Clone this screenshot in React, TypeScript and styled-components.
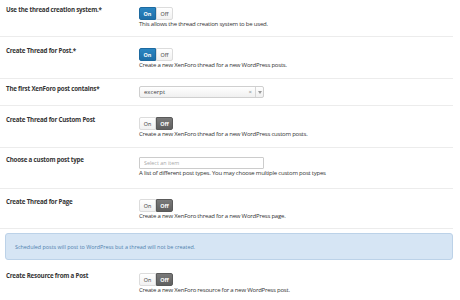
import { createGlobalStyle, styled } from "styled-components";

const GlobalStyle = createGlobalStyle`
  html, body {
    margin: 0;
    padding: 0;
    background: #ffffff;
  }
  body {
    font-family: "Open Sans", "Liberation Sans", sans-serif;
    color: #333;
  }
`;

type ToggleRow = {
  kind: "toggle";
  label: string;
  on: boolean;
  desc: string;
};

type SelectRow = {
  kind: "select";
  label: string;
  value?: string;
  placeholder?: string;
  desc?: string;
};

type NoticeRow = {
  kind: "notice";
  text: string;
};

type Item = ToggleRow | SelectRow | NoticeRow;

const items: Item[] = [
  {
    kind: "toggle",
    label: "Use the thread creation system.*",
    on: true,
    desc: "This allows the thread creation system to be used.",
  },
  {
    kind: "toggle",
    label: "Create Thread for Post.*",
    on: true,
    desc: "Create a new XenForo thread for a new WordPress posts.",
  },
  {
    kind: "select",
    label: "The first XenForo post contains*",
    value: "excerpt",
  },
  {
    kind: "toggle",
    label: "Create Thread for Custom Post",
    on: false,
    desc: "Create a new XenForo thread for a new WordPress custom posts.",
  },
  {
    kind: "select",
    label: "Choose a custom post type",
    placeholder: "Select an item",
    desc: "A list of different post types. You may choose multiple custom post types",
  },
  {
    kind: "toggle",
    label: "Create Thread for Page",
    on: false,
    desc: "Create a new XenForo thread for a new WordPress page.",
  },
  {
    kind: "notice",
    text: "Scheduled posts will post to WordPress but a thread will not be created.",
  },
  {
    kind: "toggle",
    label: "Create Resource from a Post",
    on: false,
    desc: "Create a new XenForo resource for a new WordPress post.",
  },
];

// padding (top / bottom) per row, read off the screenshot
const rowPad = ["7px 0 8px", "11px 0 9px", "7px 0 7px", "11px 0 9px", "9px 0 11px", "10px 0 8px", "", "13px 0 8px"];

function App() {
  return (
    <>
      <GlobalStyle />
      <Page>
        {items.map((item, i) => {
          if (item.kind === "notice") {
            return (
              <Notice key={i}>
                <span>{item.text}</span>
              </Notice>
            );
          }
          const last = i === items.length - 1;
          return (
            <Row key={i} $pad={rowPad[i]} $noBorder={last}>
              <Label>{item.label}</Label>
              <Field>
                {item.kind === "toggle" ? (
                  <Toggle>
                    <ToggleBtn $active={item.on} $side="on">
                      On
                    </ToggleBtn>
                    <ToggleBtn $active={!item.on} $side="off">
                      Off
                    </ToggleBtn>
                  </Toggle>
                ) : item.value ? (
                  <Select>
                    <SelectValue>{item.value}</SelectValue>
                    <Clear>×</Clear>
                    <Arrow>
                      <svg width="4" height="3" viewBox="0 0 4 3">
                        <path d="M0 0 L4 0 L2 3 Z" fill="#999" />
                      </svg>
                    </Arrow>
                  </Select>
                ) : (
                  <Input placeholder={item.placeholder} readOnly />
                )}
                {item.desc && <Desc>{item.desc}</Desc>}
              </Field>
            </Row>
          );
        })}
      </Page>
    </>
  );
}

export default App;

const Page = styled.div`
  width: 460px;
  height: 300px;
  overflow: hidden;
  display: flex;
  flex-direction: column;
`;

const Row = styled.div<{ $pad: string; $noBorder?: boolean }>`
  display: grid;
  grid-template-columns: 139px 1fr;
  margin-right: 7px;
  padding: ${(p) => p.$pad};
  border-bottom: ${(p) => (p.$noBorder ? "none" : "1px solid #ececec")};
  flex-shrink: 0;
`;

const Label = styled.div`
  padding-left: 6px;
  font-size: 6.2px;
  letter-spacing: -0.2px;
  font-weight: 700;
  color: #333;
  line-height: 8px;
  margin-top: -1px;
`;

const Field = styled.div`
  display: flex;
  flex-direction: column;
  align-items: flex-start;
`;

const Toggle = styled.div`
  display: flex;
  height: 13px;
`;

const ToggleBtn = styled.div<{ $active: boolean; $side: "on" | "off" }>`
  width: 17px;
  height: 13px;
  box-sizing: border-box;
  display: flex;
  align-items: center;
  justify-content: center;
  font-size: 5.4px;
  font-weight: ${(p) => (p.$active ? 700 : 400)};
  color: ${(p) => (p.$active ? "#ffffff" : "#333")};
  background: ${(p) =>
    p.$active
      ? p.$side === "on"
        ? "linear-gradient(#2b86c2, #1f6fa8)"
        : "linear-gradient(#7a7a7a, #5f5f5f)"
      : "linear-gradient(#ffffff, #f1f1f1)"};
  border: 1px solid
    ${(p) => (p.$active ? (p.$side === "on" ? "#1d6aa0" : "#5a5a5a") : "#dcdcdc")};
  border-radius: ${(p) => (p.$side === "on" ? "2px 0 0 2px" : "0 2px 2px 0")};
`;

const Desc = styled.div`
  margin-top: 1px;
  font-size: 6px;
  letter-spacing: -0.22px;
  line-height: 7px;
  color: #333;
  white-space: nowrap;
`;

const Select = styled.div`
  width: 125px;
  height: 12px;
  box-sizing: border-box;
  border: 1px solid #cfcfcf;
  border-radius: 2px;
  background: linear-gradient(#ffffff, #f0f0f0);
  display: flex;
  align-items: center;
`;

const SelectValue = styled.span`
  flex: 1;
  padding-left: 4px;
  font-size: 6px;
  color: #444;
`;

const Clear = styled.span`
  font-size: 6px;
  color: #888;
  margin-right: 3px;
`;

const Arrow = styled.span`
  width: 7px;
  height: 100%;
  border-left: 1px solid #d6d6d6;
  display: flex;
  align-items: center;
  justify-content: center;
`;

const Input = styled.input`
  width: 125px;
  height: 12px;
  box-sizing: border-box;
  border: 1px solid #cccccc;
  border-radius: 1px;
  padding: 0 4px;
  font-family: "Open Sans", "Liberation Sans", sans-serif;
  font-size: 5.4px;
  background: #fff;
  outline: none;
  &::placeholder {
    color: #a8a8a8;
  }
`;

const Notice = styled.div`
  margin: 4px 7px 0 5px;
  height: 27px;
  box-sizing: border-box;
  flex-shrink: 0;
  background: #d6e5f4;
  border: 1px solid #bcd2e8;
  border-radius: 3px;
  display: flex;
  align-items: center;
  padding-left: 9px;
  span {
    font-size: 5.4px;
    color: #4f7fae;
  }
`;
